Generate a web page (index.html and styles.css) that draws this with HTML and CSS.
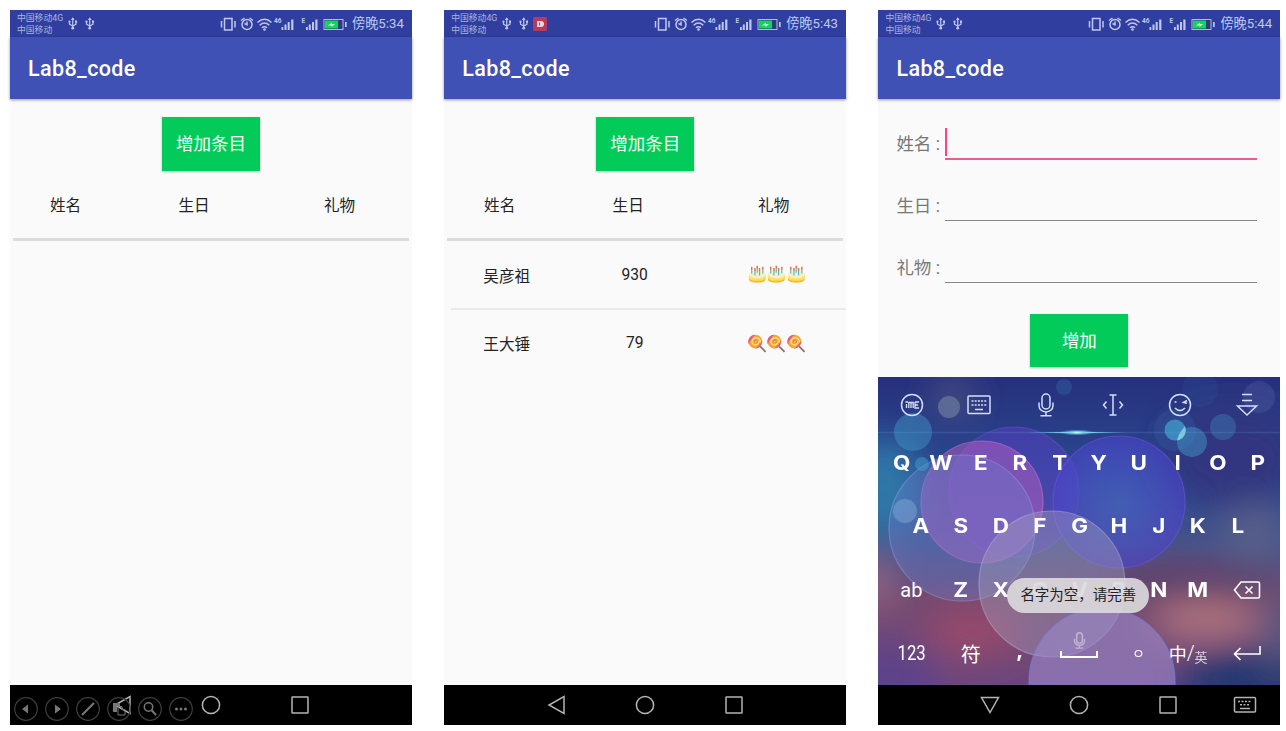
FILE: index.html
```html
<!DOCTYPE html>
<html lang="zh-CN">
<head>
<meta charset="utf-8">
<title>Lab8_code</title>
<link rel="stylesheet" href="styles.css">
</head>
<body>
<svg class="defs" aria-hidden="true">
  <symbol id="usb" viewBox="0 0 10 14"><path d="M5 1.500v11M1.500 5v2.800L5 9.800 8.500 7.800V5" fill="none" stroke="currentColor" stroke-width="1.300"/><path d="M3 3.200 5 .2 7 3.200z" fill="currentColor"/><circle cx="5" cy="12" r="1.500" fill="currentColor"/><circle cx="1.500" cy="5" r="1.200" fill="currentColor"/><path d="M7.400 3.800h2.300v2.300H7.400z" fill="currentColor"/></symbol>
  <symbol id="status" viewBox="0 0 128 16">
    <g fill="none" stroke="currentColor" stroke-width="1.500">
      <path d="M4.500 2.500h7.500v11.500H4.500zM1.500 5v6.500M15 5v6.500"/>
      <circle cx="27" cy="8.500" r="5"/><path d="M27 5.500v3.300L24.500 7.500M21 4.500 24.500 2M33 4.500 29.500 2"/>
      <path d="M37.500 6.500q7-6.500 14 0M39.700 9.200q4.800-4.500 9.600 0M42 11.800q2.500-2.200 5 0"/>
    </g>
    <circle cx="44.500" cy="13.500" r="1.300" fill="currentColor"/>
    <path d="M61.500 11h1.800v3h-1.800zM64.500 8.500h2v5.500h-2zM67.700 6h2v8h-2zM71.200 3.500h2.200v10.500h-2.200zM86 11h1.800v3H86zM88.800 8.500h2v5.500h-2zM92 6h2v8h-2zM95.300 3.500h2.200v10.500h-2.200z" fill="currentColor"/>
    <text x="54" y="7" class="net">46</text><text x="81.500" y="7" class="net">E</text>
    <rect x="104" y="3.500" width="19" height="10" fill="#2c3c78" stroke="#aebfc9"/>
    <path d="M105 4.500h13v8h-13z" fill="#12d65b"/><path d="M108 9.500 112 6.500v1.500h3l-3.500 3V9.500z" fill="#c9f5d3"/>
    <path d="M125 6h1.700v5H125z" fill="currentColor"/>
  </symbol>
  <symbol id="back" viewBox="0 0 20 20"><path d="M18 1.500v17L3 10z"/></symbol>
  <symbol id="home" viewBox="0 0 20 20"><circle cx="10" cy="10" r="8.600"/></symbol>
  <symbol id="recent" viewBox="0 0 20 20"><rect x="2" y="2" width="16" height="16" rx=".5"/></symbol>
  <symbol id="cake" viewBox="0 0 20 20">
    <path d="M1 11v4.500c0 4.500 18 4.500 18 0V11z" fill="#f6b82c"/><path d="M1 9v4.500c0 4.500 18 4.500 18 0V9z" fill="#ffe15a"/>
    <ellipse cx="10" cy="10" rx="9" ry="4.300" fill="#f9efcb"/>
    <path d="M4 4v5M7.500 5v6M12.500 5v6M16 4v5M10 3v5" stroke="#56bdb8" stroke-width="1.300"/><path d="M4 1.500v3M7.500 3v3M12.500 3v3M16 1.500v3M10 .5v3" stroke="#e96943" stroke-width="1.500"/>
  </symbol>
  <symbol id="lolly" viewBox="0 0 20 20">
    <path d="m12 12 7 7" stroke="#8a7276" stroke-width="2"/>
    <circle cx="8" cy="8" r="7.500" fill="#f4a43a"/><path d="M8 .5A7.500 7.500 0 0 0 1 11C2 7 4 4 8 .5zM15.500 7c0 4-3 8-8 8.500 3-2 5-4 8-8.500z" fill="#df5793"/>
    <path d="M8 8c2-3 5 1 2 3-4 2-7-2-5-5 3-4 9-2 8 3" fill="none" stroke="#fbe06a" stroke-width="1.500"/><path d="M7 8c1-3 4-2 3 1" fill="none" stroke="#db4f74"/>
  </symbol>
  <symbol id="mic" viewBox="0 0 24 24"><rect x="8" y="1" width="8" height="15" rx="4"/><path d="M5 9.500v3c0 8.500 14 8.500 14 0v-3M12 19v3.500M6.500 22.800h11"/></symbol>
</svg>

<main class="board">
  <section class="phone">
    <header class="status">
      <div class="carrier"><span>中国移动4G</span><span>中国移动</span></div>
      <svg class="usb"><use href="#usb"/></svg><svg class="usb"><use href="#usb"/></svg>
      <svg class="signals"><use href="#status"/></svg><span class="clock">傍晚5:34</span>
    </header>
    <h1 class="appbar">Lab8_code</h1>
    <div class="content">
      <button class="btn">增加条目</button>
      <div class="cols head"><span>姓名</span><span>生日</span><span>礼物</span></div>
    </div>
    <nav class="nav">
      <svg><use href="#back"/></svg><svg><use href="#home"/></svg><svg><use href="#recent"/></svg>
    </nav>
    <svg class="show-tools" viewBox="0 0 184 26">
      <g fill="none" stroke="#3d3d3d" stroke-width="1.200"><circle cx="13" cy="13" r="11.300"/><circle cx="44" cy="13" r="11.300"/><circle cx="75" cy="13" r="11.300"/><circle cx="106" cy="13" r="11.300"/><circle cx="137" cy="13" r="11.300"/><circle cx="168" cy="13" r="11.300"/></g>
      <g fill="#777"><path d="M9 13l6-4.500v9zM48 13l-6-4.500v9z"/><circle cx="163.500" cy="13" r="1.500"/><circle cx="168" cy="13" r="1.500"/><circle cx="172.500" cy="13" r="1.500"/><path d="M100 7h7v3h-3v6h-4z"/></g>
      <g fill="none" stroke="#777"><path d="M69 19 81 7" stroke-width="2.200"/><path d="M105 10.500h4v3h3v5.500h-7z"/><circle cx="135.500" cy="11" r="4.200" stroke-width="1.500"/><path d="m138.500 14 4.500 5" stroke-width="2"/></g>
    </svg>
  </section>

  <section class="phone">
    <header class="status">
      <div class="carrier"><span>中国移动4G</span><span>中国移动</span></div>
      <svg class="usb"><use href="#usb"/></svg><svg class="usb"><use href="#usb"/></svg>
      <svg class="alert" viewBox="0 0 14 14"><rect width="14" height="14" rx="2" fill="#b43b5c"/><path d="M4 4h4q3 0 3 3t-3 3H4z" fill="#eed5dc"/><path d="M6.500 5.500v3" stroke="#b43b5c"/></svg>
      <svg class="signals"><use href="#status"/></svg><span class="clock">傍晚5:43</span>
    </header>
    <h1 class="appbar">Lab8_code</h1>
    <div class="content">
      <button class="btn">增加条目</button>
      <div class="cols head"><span>姓名</span><span>生日</span><span>礼物</span></div>
      <div class="cols item"><span>吴彦祖</span><span>930</span><span class="gifts"><svg><use href="#cake"/></svg><svg><use href="#cake"/></svg><svg><use href="#cake"/></svg></span></div>
      <div class="cols item"><span>王大锤</span><span>79</span><span class="gifts"><svg><use href="#lolly"/></svg><svg><use href="#lolly"/></svg><svg><use href="#lolly"/></svg></span></div>
    </div>
    <nav class="nav">
      <svg><use href="#back"/></svg><svg><use href="#home"/></svg><svg><use href="#recent"/></svg>
    </nav>
  </section>

  <section class="phone">
    <header class="status">
      <div class="carrier"><span>中国移动4G</span><span>中国移动</span></div>
      <svg class="usb"><use href="#usb"/></svg><svg class="usb"><use href="#usb"/></svg>
      <svg class="signals"><use href="#status"/></svg><span class="clock">傍晚5:44</span>
    </header>
    <h1 class="appbar">Lab8_code</h1>
    <div class="content form">
      <div class="field active"><span class="label">姓名 :</span><div class="line"><i class="caret"></i></div></div>
      <div class="field"><span class="label">生日 :</span><div class="line"></div></div>
      <div class="field"><span class="label">礼物 :</span><div class="line"></div></div>
      <button class="btn">增加</button>
    </div>
    <div class="keyboard">
      <svg class="wall" viewBox="0 0 402 308" preserveAspectRatio="none">
        <defs>
          <linearGradient id="sky" x1="0" y1="0" x2="0" y2="1"><stop offset="0" stop-color="#27307c"/><stop offset=".3" stop-color="#2a4890"/><stop offset=".55" stop-color="#47548a"/><stop offset=".72" stop-color="#744a70"/><stop offset="1" stop-color="#6c467d"/></linearGradient>
          <filter id="soft" x="-100%" y="-150%" width="300%" height="400%"><feGaussianBlur stdDeviation="17"/></filter>
          <radialGradient id="flare"><stop offset="0" stop-color="#d8ffff"/><stop offset=".3" stop-color="#78d8ef"/><stop offset="1" stop-color="#5ab0e0" stop-opacity="0"/></radialGradient>
          <radialGradient id="indigo"><stop offset="0" stop-color="#4a68cc" stop-opacity=".6"/><stop offset="1" stop-color="#4d43cc" stop-opacity=".6"/></radialGradient>
        </defs>
        <rect width="402" height="308" fill="url(#sky)"/>
        <g filter="url(#soft)">
          <ellipse cx="5" cy="112" rx="38" ry="50" fill="#2f78a8"/>
          <ellipse cx="355" cy="80" rx="70" ry="50" fill="#30347f"/>
          <ellipse cx="0" cy="205" rx="12" ry="25" fill="#a87591"/>
          <ellipse cx="95" cy="255" rx="50" ry="25" fill="#984a6a"/>
          <ellipse cx="310" cy="203" rx="90" ry="16" fill="#5d4069"/>
          <ellipse cx="375" cy="155" rx="30" ry="30" fill="#58618a"/>
          <ellipse cx="328" cy="243" rx="55" ry="17" fill="#b97a80"/>
          <ellipse cx="10" cy="300" rx="50" ry="30" fill="#5c438b"/>
          <ellipse cx="380" cy="305" rx="80" ry="32" fill="#20376f"/>
          <ellipse cx="402" cy="255" rx="18" ry="40" fill="#56597f"/>
          <ellipse cx="75" cy="20" rx="18" ry="20" fill="#50537f"/>
        </g>
        <g stroke-width="1.200">
          <circle cx="136" cy="115" r="65" fill="#5b40c8" fill-opacity=".48" stroke="#795bd0" stroke-opacity=".4"/>
          <circle cx="104" cy="125" r="61" fill="#b35ec0" fill-opacity=".52" stroke="#c86dc9" stroke-opacity=".6"/>
          <circle cx="241" cy="125" r="66" fill="url(#indigo)" stroke="#6657d8" stroke-opacity=".6"/>
          <circle cx="84" cy="151" r="73" fill="#6b80d0" fill-opacity=".36" stroke="#9dabe0" stroke-opacity=".4"/>
          <circle cx="174" cy="207" r="73" fill="#a6a1bd" fill-opacity=".4" stroke="#beb9dd" stroke-opacity=".45"/>
          <circle cx="224" cy="304" r="73" fill="#9c8acb" fill-opacity=".6" stroke="#7780de" stroke-opacity=".65"/>
        </g>
        <g fill="#429fce">
          <circle cx="35" cy="55" r="19" opacity=".42"/><circle cx="71" cy="30" r="11" fill="#899ab0" opacity=".45"/>
          <circle cx="297" cy="53" r="21" opacity=".12"/><circle cx="314" cy="65" r="15" opacity=".45"/><circle cx="297" cy="53" r="10.500" opacity=".75"/>
          <path d="M307 49a10.500 10.500 0 0 1-8 14.500q2-8 8-14.500z" fill="#95e0ed" opacity=".7"/>
          <circle cx="345" cy="50" r="13" opacity=".3"/><circle cx="186" cy="10" r="8" opacity=".2"/><circle cx="381" cy="20" r="16" fill="#6d79bc" opacity=".22"/>
          <circle cx="322" cy="12" r="18" opacity=".08"/><circle cx="44" cy="87" r="7" opacity=".5"/><circle cx="27" cy="134" r="12" fill="#8fb3dc" opacity=".4"/>
        </g>
        <path d="M0 55.500h402" stroke="#6fa4db" stroke-opacity=".2"/>
        <ellipse cx="199" cy="55.500" rx="50" ry="1.200" fill="url(#flare)"/><ellipse cx="199" cy="55.500" rx="18" ry="3" fill="url(#flare)"/>
      </svg>
      <div class="tools">
        <svg viewBox="0 0 24 24"><circle cx="12" cy="12" r="10.500"/><path d="M5.500 9h2.500M6.500 11v4M8.800 15V9.500h4.400V15M11 9.500V15M15 9v6h4M15 12h3M15 9h4" stroke-width="1.300"/></svg>
        <svg viewBox="0 0 24 24"><rect x="1" y="3" width="22" height="17.500" rx="1"/><path d="M4.500 8h15M4.500 12h15" stroke-dasharray="2 1.200"/><path d="M8 16.500h8"/></svg>
        <svg><use href="#mic"/></svg>
        <svg viewBox="0 0 24 24"><path d="M12 2v20M8.500 2h7M8.500 22h7M5.500 8.500 2.500 12l3 3.500M18.500 8.500l3 3.500-3 3.500"/></svg>
        <svg viewBox="0 0 24 24"><circle cx="12" cy="12" r="10.500"/><path d="M7 15q5 5 10 0M6.500 9h2M19 7.500 15.500 9.500l3.500.7"/></svg>
        <svg viewBox="0 0 24 24"><path d="M7 1.500h10M7 7.500h10M2.500 13h19L12 22z"/></svg>
      </div>
      <div class="row"><b>Q</b><b>W</b><b>E</b><b>R</b><b>T</b><b>Y</b><b>U</b><b>I</b><b>O</b><b>P</b></div>
      <div class="row"><b>A</b><b>S</b><b>D</b><b>F</b><b>G</b><b>H</b><b>J</b><b>K</b><b>L</b></div>
      <div class="row"><span class="mode">ab</span><b>Z</b><b>X</b><b>C</b><b>V</b><b>B</b><b>N</b><b>M</b><span class="mode"><svg class="del" viewBox="0 0 28 20"><path d="M8 2h17q1.500 0 1.500 1.500v13q0 1.500-1.500 1.500H8L1.500 10zM12.500 6.500l7 7M19.500 6.500l-7 7"/></svg></span></div>
      <div class="row"><span class="mode digits">123</span><span class="mode">符</span><b class="comma">,</b>
        <span class="space"><svg class="small-mic"><use href="#mic"/></svg><i class="bar"></i></span>
        <b><i class="stop"></i></b><span class="mode lang">中<em>/</em><small>英</small></span><span class="mode"><svg class="enter" viewBox="0 0 28 20"><path d="M27 3v8H2M7.500 5 1.500 11l6 6"/></svg></span></div>
    </div>
    <nav class="nav">
      <svg viewBox="0 0 20 20"><path d="M1.500 2.500h17L10 17.500z"/></svg><svg><use href="#home"/></svg><svg><use href="#recent"/></svg>
      <svg class="ime" viewBox="0 0 24 18"><rect x="1.500" y="1.500" width="21" height="14.500" rx="1"/><path d="M5 5.500h14M7 8.700h10" stroke-dasharray="2 1.500"/><path d="M7 12.500h10"/></svg>
    </nav>
    <div class="toast">名字为空，请完善</div>
  </section>
</main>
</body>
</html>
```
FILE: styles.css
```css
* { box-sizing: border-box; }
body {
  margin: 0;
  background: #fff;
  font-family: Roboto, "Noto Sans CJK SC", sans-serif;
  color: #222;
}
.defs { position: absolute; width: 0; height: 0; }
.board { display: flex; gap: 32.200px; padding: 10px 0 0 10px; width: 1286px; height: 731px; overflow: hidden; }
.phone {
  position: relative;
  display: flex;
  flex-direction: column;
  flex: none;
  width: 402px;
  height: 715px;
  background: #fafafa;
}
.status {
  display: flex;
  align-items: center;
  height: 27px;
  padding: 0 9px 0 7px;
  background: #303f9f;
  color: #bfc7ee;
}
.carrier { display: flex; flex-direction: column; width: 47px; margin-right: 4px; font-size: 8.800px; line-height: 12px; color: #aab3e2; white-space: nowrap; }
.usb { width: 9.500px; height: 13px; margin-right: 7.500px; }
.alert { width: 14px; height: 14px; margin-left: -3px; }
.signals { width: 128px; height: 16px; margin-left: auto; }
.net { font-size: 6.500px; font-weight: 700; fill: currentColor; }
.clock { width: 51px; margin-left: 4px; font-size: 13.200px; line-height: 27px; white-space: nowrap; }
.appbar {
  flex: none;
  height: 62px;
  margin: 0;
  padding-left: 18px;
  background: #3f51b5;
  box-shadow: 0 1px 3px #0006;
  color: #fff;
  font-size: 21.500px;
  letter-spacing: .4px;
  font-weight: 500;
  line-height: 63px;
}
.content { display: flex; flex-direction: column; align-items: center; flex: 1; padding-top: 18px; }
.btn {
  flex: none;
  width: 98px;
  height: 54px;
  padding: 0;
  border: 0;
  background: #03cb59;
  box-shadow: 0 1px 2px #0004;
  color: #fff;
  font: 17.500px/55px Roboto, "Noto Sans CJK SC", sans-serif;
}
.cols { display: grid; align-items: center; justify-items: center; font-size: 15.600px; }
.head { grid-template-columns: 105px 152px 139px; width: 396px; height: 70px; padding-bottom: 1px; border-bottom: 3px solid #dcdcdc; }
.item { grid-template-columns: 111px 145px 139px; align-self: flex-end; width: 395px; height: 67px; }
.item + .item { border-top: 2px solid #e9e9e9; height: 68px; }
.gifts { display: flex; gap: 1px; }
.gifts svg { width: 18.500px; height: 19px; }
.nav {
  display: grid;
  grid-template-columns: 89px 89px 89px 65px;
  align-items: center;
  justify-items: center;
  height: 40px;
  padding-left: 67px;
  background: #000;
}
.nav svg { width: 20px; height: 20px; fill: none; stroke: #b4b4b4; stroke-width: 1.500; }
.nav .ime { width: 24px; height: 18px; }
.show-tools { position: absolute; left: 3px; bottom: 3px; width: 184px; height: 26px; }

.form { flex: none; height: 278px; padding-top: 14px; }
.field { display: flex; width: 361px; height: 62px; align-self: flex-start; margin-left: 18px; color: #777; }
.label { width: 49px; font-size: 17.500px; line-height: 62px; white-space: nowrap; }
.line { display: flex; flex: 1; height: 46px; border-bottom: 1px solid #858585; }
.active .line { border-bottom: 2px solid #e85d90; height: 47px; }
.active .caret { width: 2px; height: 28px; margin-top: 15px; background: #ff4081; }
.form .btn { margin-top: 15px; height: 53px; }

.keyboard { position: relative; height: 308px; overflow: hidden; color: #fff; }
.keyboard svg { fill: none; stroke: #fff; stroke-width: 1.600; }
.keyboard .wall { position: absolute; inset: 0; width: 100%; height: 100%; stroke: none; }
.tools, .row { position: relative; display: flex; align-items: center; justify-content: center; }
.tools { height: 56px; margin-bottom: -2px; }
.tools svg { width: 24px; height: 24px; margin: 0 21.500px; stroke: #d5ddfa; stroke-width: 1.500; flex: none; }
.row { height: 63.500px; }
.row b { display: flex; justify-content: center; width: 39.550px; font-family: Inter, sans-serif; font-size: 20px; font-weight: 700; transform: scaleX(1.12); }
.mode { display: flex; align-items: center; justify-content: center; width: 59.300px; font-size: 20px; }
.digits { transform: scaleX(.84); }
.del { width: 28px; height: 20px; }
.enter { width: 28px; height: 20px; }
.row .comma { padding-bottom: 6px; }
.space { display: flex; flex-direction: column; align-items: center; width: 79.100px; padding-bottom: 17px; }
.keyboard .small-mic { width: 17px; height: 17px; stroke: #d8c5dc; stroke-width: 2; opacity: .75; }
.keyboard .small-mic use { transform: scale(1); }
.bar { width: 38px; height: 7px; margin-top: 2px; border: 2px solid #fff; border-top: 0; }
.stop { width: 7px; height: 7px; border: 1.500px solid #fff; border-radius: 50%; }
.lang em { font-style: normal; font-weight: 300; font-size: 20px; }
.lang { font-size: 18px; }
.lang small { font-size: 13px; padding-top: 6px; opacity: .75; }
.toast {
  position: absolute;
  left: 129px;
  top: 568px;
  width: 142px;
  height: 35px;
  border-radius: 18px;
  background: #dcdadde8;
  color: #222;
  font-size: 14.500px;
  line-height: 36px;
  text-align: center;
  white-space: nowrap;
}
```
